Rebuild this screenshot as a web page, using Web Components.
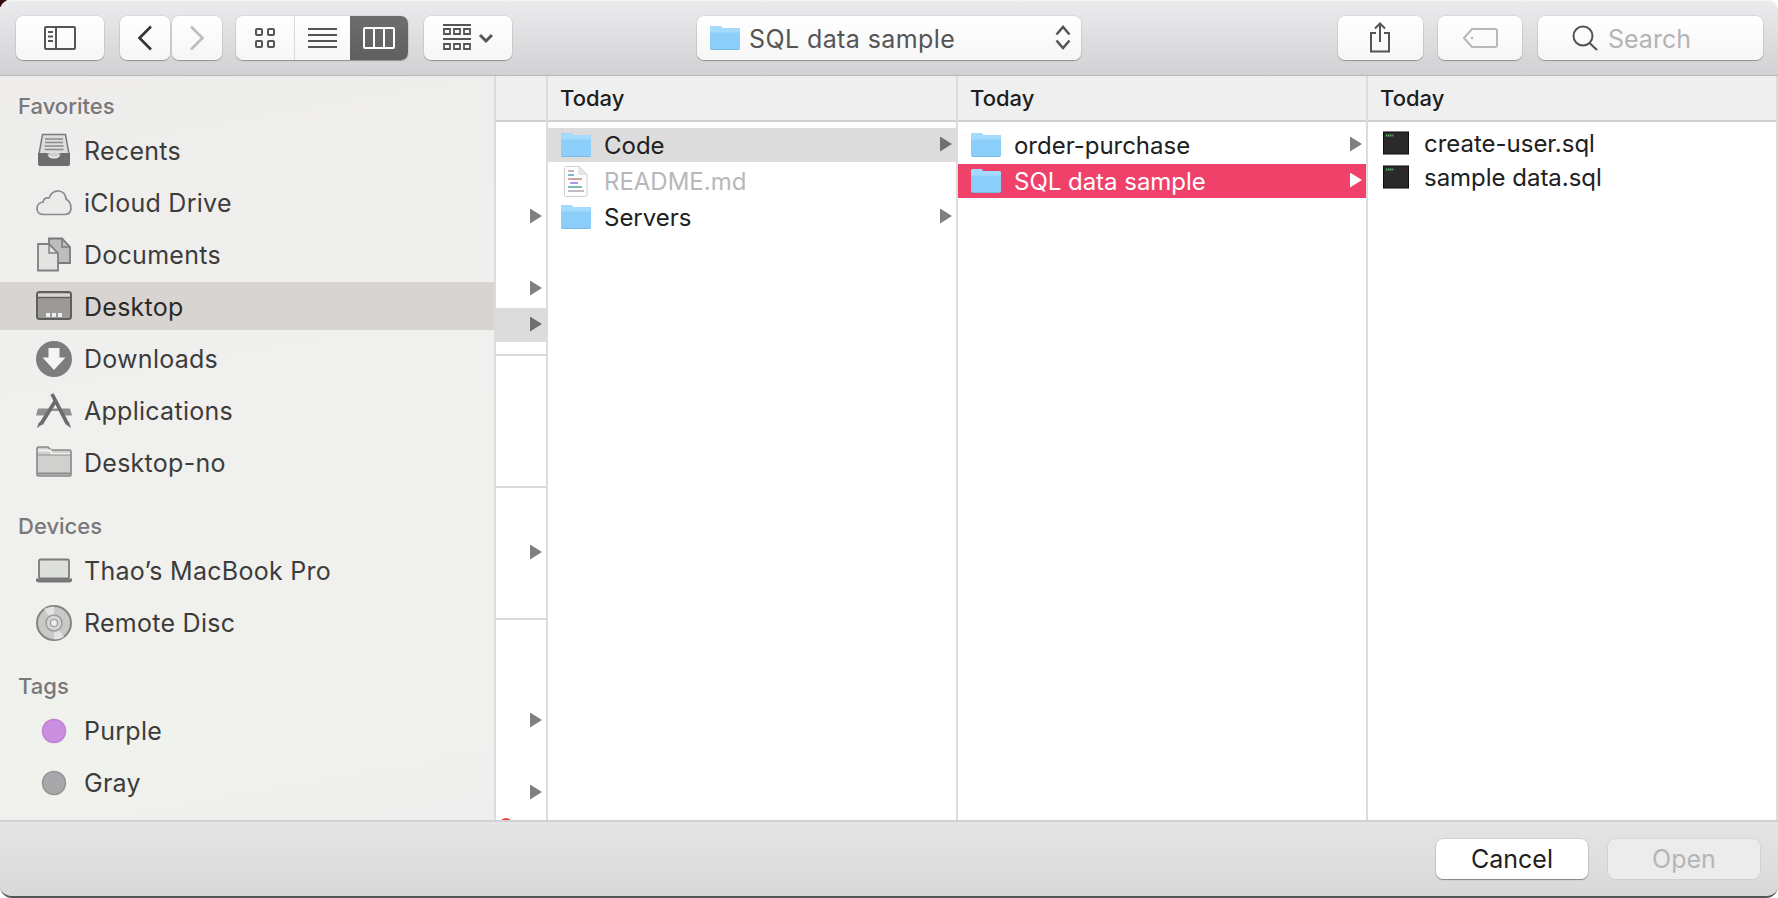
<!DOCTYPE html>
<html><head><meta charset="utf-8"><title>Open</title>
<style>
html,body{margin:0;padding:0;height:898px;overflow:hidden;background:radial-gradient(circle at 0 0,#3a0a0a 0 7px,#fff 7px);font-family:Inter,"Liberation Sans",sans-serif}
</style></head><body>
<mac-window>
  <tool-bar>
    <tool-btn w="88" icon="sidebar"></tool-btn>
    <tool-btn w="50" icon="back" ml="16"></tool-btn>
    <tool-btn w="50" icon="forward" ml="2"></tool-btn>
    <seg-group>
      <tool-btn seg w="59" icon="grid"></tool-btn>
      <tool-btn seg w="55" icon="list"></tool-btn>
      <tool-btn seg active w="58" icon="columns"></tool-btn>
    </seg-group>
    <tool-btn w="88" icon="arrange" ml="16"></tool-btn>
    <path-popup>SQL data sample</path-popup>
    <tool-btn w="85" icon="share" ml="257" shift></tool-btn>
    <tool-btn w="84" icon="tag" ml="15"></tool-btn>
    <search-box>Search</search-box>
  </tool-bar>
  <main-area>
    <side-bar>
      <side-head first>Favorites</side-head>
      <side-item icon="recents">Recents</side-item>
      <side-item icon="cloud">iCloud Drive</side-item>
      <side-item icon="documents">Documents</side-item>
      <side-item icon="desktop" selected>Desktop</side-item>
      <side-item icon="downloads">Downloads</side-item>
      <side-item icon="apps">Applications</side-item>
      <side-item icon="plainfolder">Desktop-no</side-item>
      <side-head>Devices</side-head>
      <side-item icon="laptop">Thao’s MacBook Pro</side-item>
      <side-item icon="disc">Remote Disc</side-item>
      <side-head>Tags</side-head>
      <side-item icon="purple">Purple</side-item>
      <side-item icon="gray">Gray</side-item>
    </side-bar>
    <finder-col w="50" nohead>
      <file-row arrow style="margin-top:72px"></file-row>
      <file-row arrow style="margin-top:36px"></file-row>
      <file-row arrow state="grey"></file-row>
      <col-sep style="margin-top:10px"></col-sep>
      <col-sep style="margin-top:130px"></col-sep>
      <file-row arrow style="margin-top:48px"></file-row>
      <col-sep style="margin-top:46px"></col-sep>
      <file-row arrow style="margin-top:84px"></file-row>
      <file-row arrow style="margin-top:36px"></file-row>
      <red-dot></red-dot>
    </finder-col>
    <finder-col w="408">
      <file-row icon="folder" arrow state="grey">Code</file-row>
      <file-row icon="readme" state="dim">README.md</file-row>
      <file-row icon="folder" arrow>Servers</file-row>
    </finder-col>
    <finder-col w="408">
      <file-row icon="folder" arrow>order-purchase</file-row>
      <file-row icon="folder" arrow state="pink">SQL data sample</file-row>
    </finder-col>
    <finder-col w="408" compact>
      <file-row icon="terminal" tight>create-user.sql</file-row>
      <file-row icon="terminal" tight>sample data.sql</file-row>
    </finder-col>
  </main-area>
  <bottom-bar>
    <push-btn>Cancel</push-btn>
    <push-btn disabled>Open</push-btn>
  </bottom-bar>
</mac-window>
<script>
const FOLDER=`<svg width="30" height="25" viewBox="0 0 30 25"><path d="M0 3Q0 1 2 1H10Q11 1 12 3H28Q30 3 30 5V23Q30 25 28 25H2Q0 25 0 23Z" fill="#6fb4e3"/><path d="M0 3Q0 1 2 1H10Q11 1 12 3H28Q30 3 30 5V23.5Q30 24.200 28 24.200H2Q0 24.200 0 23.5Z" fill="#8ccefa"/><path d="M0 7.500V3.500Q0 1 2 1H10Q11 1 12 3H28Q30 3 30 5V7.500Z" fill="#a4dafc"/></svg>`;
const ICONS={
 folder:FOLDER,
 readme:`<svg width="25" height="31" viewBox="0 0 25 31"><path d="M1.500 1.500Q1.500 .5 2.500 .5H16L24 8.500V29Q24 30.500 22.500 30.500H2.500Q1.500 30.500 1.500 29Z" fill="#fdfdfd" stroke="#d0d0d0"/><path d="M16 .5V8.500H24Z" fill="#e8e8e8" stroke="#d0d0d0" stroke-width=".6"/><path d="M5 5h6" stroke="#aaa" stroke-width="1.600"/><path d="M5 9h6" stroke="#5eaab8" stroke-width="1.600"/><path d="M5 13h14" stroke="#c99a9a" stroke-width="1.800"/><path d="M7 17h8" stroke="#a58ae8" stroke-width="1.800"/><path d="M5 21h14" stroke="#5ea8a8" stroke-width="1.600"/><path d="M5 25h16" stroke="#b0b0b0" stroke-width="1.600"/></svg>`,
 terminal:`<svg width="28" height="24" viewBox="0 0 28 24"><rect x="1" y=".5" width="26" height="23" rx="1" fill="#dfe3e8"/><rect x="1.500" y="1" width="25" height="22" fill="#2a2a2a" stroke="#0e0e0e"/><path d="M4 4.500h1.300m.8 0h1.300m.8 0h1.300m.8 0h1" stroke="#66c36a" stroke-width="1.800"/></svg>`,
 sidebar:`<svg width="32" height="24" viewBox="0 0 32 24" fill="none" stroke="#555" stroke-width="2"><rect x="1" y="1" width="30" height="22" rx="1"/><path d="M12 1V23"/><path d="M4 6H9M4 10.500H9M4 15H9" stroke-width="1.800"/></svg>`,
 back:`<svg width="16" height="26" viewBox="0 0 16 26" fill="none" stroke="#333" stroke-width="2.600"><path d="M14 1.500L2.500 13L14 24.500"/></svg>`,
 forward:`<svg width="16" height="26" viewBox="0 0 16 26" fill="none" stroke="#bdbdbd" stroke-width="2.600"><path d="M2 1.500L13.500 13L2 24.500"/></svg>`,
 grid:`<svg width="20" height="20" viewBox="0 0 20 20" fill="none" stroke="#555" stroke-width="2"><rect x="1" y="1" width="6" height="6" rx="1"/><rect x="13" y="1" width="6" height="6" rx="1"/><rect x="1" y="13" width="6" height="6" rx="1"/><rect x="13" y="13" width="6" height="6" rx="1"/></svg>`,
 list:`<svg width="29" height="21" viewBox="0 0 29 21" fill="none" stroke="#555" stroke-width="2"><path d="M0 2H29M0 8H29M0 14H29M0 20H29"/></svg>`,
 columns:`<svg width="32" height="22" viewBox="0 0 32 22" fill="none" stroke="#fff" stroke-width="2"><rect x="1" y="1" width="30" height="20" rx="1"/><path d="M11 1V21M21 1V21"/></svg>`,
 arrange:`<svg width="50" height="27" viewBox="0 0 50 27" fill="none" stroke="#555"><path d="M0 1H28M0 15H28" stroke-width="2"/><path d="M1 5h6v5H1zM11 5h6v5h-6zM21 5h6v5h-6zM1 20h6v5H1zM11 20h6v5h-6zM21 20h6v5h-6z" stroke-width="1.800"/><path d="M37 11L43 17L49 11" stroke-width="3"/></svg>`,
 share:`<svg width="22" height="31" viewBox="0 0 22 31" fill="none" stroke="#555" stroke-width="2"><path d="M7 11H2V29.500H20V11H15"/><path d="M11 20V2M6 6.500L11 1.500L16 6.500"/></svg>`,
 tag:`<svg width="35" height="20" viewBox="0 0 35 20" fill="none" stroke="#b8b8b8" stroke-width="2"><path d="M9 1H32Q34 1 34 3V17Q34 19 32 19H9L1 10Z"/><circle cx="9" cy="10" r="1.300" fill="#b8b8b8" stroke="none"/></svg>`,
 search:`<svg width="26" height="26" viewBox="0 0 26 26" fill="none" stroke="#555" stroke-width="2"><circle cx="11" cy="11" r="9.500"/><path d="M17.500 18L25 25" stroke-width="2.200"/></svg>`,
 updown:`<svg width="16" height="25" viewBox="0 0 16 25" fill="none" stroke="#555" stroke-width="2.500"><path d="M1.500 9.500L8 2L14.500 9.500M1.500 15.500L8 23L14.500 15.500"/></svg>`,
 recents:`<svg width="36" height="36" viewBox="0 0 36 36"><path d="M6.500 1.500H29.500L33 21H3Z" fill="#dededd" stroke="#7a7a7a" stroke-width="1.500"/><path d="M9 6H27M9 9.500H27M8.500 13H27.500M8.500 16.500H27.500" stroke="#8a8a8a" stroke-width="1.400"/><path d="M2 20H11Q12 25.500 18 25.500Q24 25.500 25 20H34V31Q34 33 32 33H4Q2 33 2 31Z" fill="#6e6e6e"/><path d="M12.500 20H23.500Q23 24 18 24Q13 24 12.500 20Z" fill="#cfcfcf"/></svg>`,
 cloud:`<svg width="36" height="36" viewBox="0 0 36 36"><path d="M7 29.500Q1 29 1 23.500Q1 18 7 17Q8 12 13 13Q16 5.500 23 6Q29.500 7 30 14Q35 17 35 23Q35 29.500 28 29.500Z" fill="#ebebe9" stroke="#8c8c8c" stroke-width="1.700"/></svg>`,
 documents:`<svg width="36" height="36" viewBox="0 0 36 36"><path d="M13 1.500H26L34 10V26H13Z" fill="#bdbdbb" stroke="#7b7b7b" stroke-width="1.800"/><path d="M2 7H13L22 16V33.500H2Z" fill="#e3e3e1" stroke="#808080" stroke-width="1.800"/><path d="M13 7V16H22" fill="none" stroke="#808080" stroke-width="1.500"/><path d="M26 1.500V10H34" fill="none" stroke="#7b7b7b" stroke-width="1.500"/></svg>`,
 desktop:`<svg width="36" height="36" viewBox="0 0 36 36"><rect x="1" y="3" width="34" height="27" rx="2.500" fill="#9c9a96" stroke="#5e5e5e" stroke-width="2"/><path d="M2 4.500H34V8H2Z" fill="#d9d5d1"/><path d="M2 8.500H34" stroke="#5e5e5e" stroke-width="1.400"/><path d="M10 24h4v4h-4zM16 24h4v4h-4zM22 24h4v4h-4z" fill="#eee"/></svg>`,
 downloads:`<svg width="36" height="36" viewBox="0 0 36 36"><circle cx="18" cy="18" r="18" fill="#7d7d7d"/><path d="M12.500 7H23.500V16.500H29.500L18 29L6.500 16.500H12.500Z" fill="#f5f5f3"/></svg>`,
 apps:`<svg width="36" height="36" viewBox="0 0 36 36" fill="none"><path d="M2 15.500H12L9 22.500H0ZM24 15.500H34L36 22.500H27ZM12 15.500H24L25 18H11Z" fill="#8f8f8f"/><path d="M16 1L31.500 31" stroke="#6b6b6b" stroke-width="3.800"/><path d="M20 7L5 31" stroke="#6b6b6b" stroke-width="3.800"/><path d="M3 29L1 35L6 31.500ZM33 29L35 35L30 31.500Z" fill="#6b6b6b"/></svg>`,
 plainfolder:`<svg width="36" height="36" viewBox="0 0 36 36"><path d="M1 3.500Q1 2 2.500 2H12L15 5H33.500Q35 5 35 6.500V30Q35 31 33.500 31H2.500Q1 31 1 30Z" fill="#d0d0ce" stroke="#888" stroke-width="1.600"/><path d="M2 5.500H14.500L15.500 9H34" fill="none" stroke="#f2f2f0" stroke-width="2"/><path d="M1.500 10H34.500" stroke="#8f8f8f" stroke-width="1"/><path d="M1.500 28.500H34.500" stroke="#8a8a8a" stroke-width="1.800"/></svg>`,
 laptop:`<svg width="36" height="36" viewBox="0 0 36 36"><rect x="3" y="6.500" width="30" height="19" rx="1.500" fill="#dcdfdb" stroke="#7b7b7b" stroke-width="1.800"/><path d="M0 25.500H36V27Q36 29.500 33 29.500H3Q0 29.500 0 27Z" fill="#777"/></svg>`,
 disc:`<svg width="36" height="36" viewBox="0 0 36 36"><circle cx="18" cy="18" r="17" fill="#c9cac7" stroke="#858585" stroke-width="2"/><path d="M18 18L8 4Q13 1.500 18 1.500ZM18 18L28 32Q23 34.500 18 34.500Z" fill="#e2e3e0"/><circle cx="18" cy="18" r="8" fill="#d4d5d2" stroke="#9a9a9a" stroke-width="1.400"/><circle cx="18" cy="18" r="3.500" fill="#eeefec" stroke="#9a9a9a" stroke-width="1.200"/></svg>`,
 purple:`<svg width="36" height="36" viewBox="0 0 36 36"><circle cx="18" cy="18" r="11.500" fill="#cb8fe0" stroke="#c27fd8" stroke-width="1.500"/></svg>`,
 gray:`<svg width="36" height="36" viewBox="0 0 36 36"><circle cx="18" cy="18" r="11.500" fill="#a8a8aa" stroke="#949496" stroke-width="1.500"/></svg>`
};
function def(name,css,html,after){
  customElements.define(name,class extends HTMLElement{
    connectedCallback(){
      if(this.shadowRoot)return;
      const s=this.attachShadow({mode:'open'});
      s.innerHTML=`<style>${css}</style>`+(typeof html==='function'?html(this):html);
      if(after)after(this,s);
    }
  });
}
const btnFace=`background:linear-gradient(#fff,#f6f6f6);border-radius:7px;box-shadow:0 1px 1px rgba(0,0,0,.28),0 0 0 .5px rgba(0,0,0,.12);`;
def('mac-window',`:host{display:flex;flex-direction:column;width:1778px;height:898px;box-sizing:border-box;border-radius:10px 10px 12px 12px;border-bottom:2px solid #555;overflow:hidden;color:#222;font:24px Inter,"Liberation Sans",sans-serif}`,`<slot></slot>`);
def('tool-bar',`:host{display:flex;flex:none;align-items:center;box-sizing:border-box;height:76px;padding:0 15px 0 16px;background:linear-gradient(#ecebed,#d2d0d3);border-bottom:1px solid #b8b7b9;box-shadow:inset 0 1px 0 #f5f4f5}`,`<slot></slot>`);
def('tool-btn',`:host{display:flex;flex:none;align-items:center;justify-content:center;height:44px;box-sizing:border-box;${btnFace}}
:host([seg]){border-radius:0;box-shadow:none;background:none;height:100%}
:host([active]){background:linear-gradient(#6d6d6d,#5f5f5f)}
:host([shift]){padding-right:2px}
svg{display:block}`,t=>ICONS[t.getAttribute('icon')],t=>{t.style.width=t.getAttribute('w')+'px';const m=t.getAttribute('ml');if(m)t.style.marginLeft=m+'px';});
def('seg-group',`:host{display:flex;flex:none;height:44px;margin-left:14px;border-radius:7px;overflow:hidden;background:linear-gradient(#fff,#f6f6f6);box-shadow:0 1px 1px rgba(0,0,0,.28),0 0 0 .5px rgba(0,0,0,.12)}
::slotted(:first-child){border-right:1px solid #d9d9d9}`,`<slot></slot>`);
def('path-popup',`:host{display:flex;flex:none;align-items:center;box-sizing:border-box;width:384px;height:44px;margin-left:185px;padding:0 10px 0 13px;${btnFace};color:#555;font-size:25px;letter-spacing:.4px}
.t{flex:1;margin-left:9px;padding-top:2px}svg{display:block}`,`${FOLDER}<span class="t"><slot></slot></span>${ICONS.updown}`);
def('search-box',`:host{display:flex;flex:none;align-items:center;box-sizing:border-box;width:225px;height:44px;margin-left:16px;padding-left:34px;gap:10px;${btnFace};color:#b4b4b4;font-size:25px}svg{display:block}.t{padding-top:2px}`,`${ICONS.search}<span class="t"><slot></slot></span>`);
def('main-area',`:host{display:flex;flex:1;min-height:0;background:#fff}`,`<slot></slot>`);
def('side-bar',`:host{display:flex;flex-direction:column;flex:none;width:494px;border-right:2px solid #dcdcdc;background:linear-gradient(170deg,#eeedec 0%,#f0f0ee 45%,#f0f2ed 85%,#efeeee 100%)}`,`<slot></slot>`);
def('side-head',`:host{display:flex;flex:none;align-items:flex-end;height:56px;box-sizing:border-box;padding:0 0 6px 18px;color:#78787a;font-size:22px;font-weight:500;line-height:26px}
:host([first]){height:49px;padding-bottom:6px}`,`<slot></slot>`);
def('side-item',`:host{display:flex;flex:none;align-items:center;box-sizing:border-box;height:48px;margin:2px 0;padding-left:36px;gap:12px;color:#3c3c3c;font-size:25px;letter-spacing:.27px}
:host([selected]){margin:1px 0 3px;padding-top:2px;background:#d8d4d1;color:#2a2a2a}
svg{display:block}`,t=>ICONS[t.getAttribute('icon')]+`<span><slot></slot></span>`);
def('finder-col',`:host{display:flex;flex:none;flex-direction:column;position:relative;border-right:2px solid #dcdcdc}
.h{flex:none;box-sizing:border-box;height:46px;border-bottom:2px solid #cfcfcf;background:#efefef;padding-left:12px;padding-top:1px;line-height:42px;font-size:22px;font-weight:500;color:#1e1e1e}
.b{display:flex;flex-direction:column;flex:1;min-height:0;padding-top:6px;position:relative;overflow:hidden}
:host([compact]) .b{padding-top:4px}`,t=>`<div class="h">${t.hasAttribute('nohead')?'':'Today'}</div><div class="b"><slot></slot></div>`,t=>{t.style.width=t.getAttribute('w')+'px';});
def('file-row',`:host{display:flex;flex:none;align-items:center;height:34px;margin-bottom:2px;padding:0 4px 0 13px;color:#202020;font-size:24px;letter-spacing:-.02px}
:host([tight]){margin-bottom:0;padding-left:13px}
:host([state=grey]){background:#dcdcdc}
:host([state=dim]){color:#b8b8b8}
:host([state=pink]){background:#ef416a;color:#fff}
.i{flex:none;width:30px;display:flex;justify-content:center;margin-right:13px}
:host([icon=readme]) .i{padding-right:2px;width:28px}
:host([icon=folder]) .i{margin-bottom:2px}
.l{flex:1;white-space:nowrap}
.a{flex:none;width:12px;height:15px;margin-bottom:2px;background:#7f7f7f;clip-path:polygon(0 0,100% 50%,0 100%)}
:host([state=grey]) .a{background:#6f6f6f}
:host([state=pink]) .a{background:#fff}
svg{display:block}`,t=>{
  const ic=t.getAttribute('icon');
  const arrow=t.hasAttribute('arrow')?'<span class="a"></span>':'';
  if(!ic)return `<span class="l"></span>${arrow}`;
  return `<span class="i">${ICONS[ic]}</span><span class="l"><slot></slot></span>${arrow}`;
});
def('col-sep',`:host{display:block;flex:none;height:2px;background:#d9d9d9}`,``);
def('red-dot',`:host{position:absolute;left:4px;bottom:-10px;width:12px;height:12px;border-radius:50%;background:#e8443a}`,``);
def('bottom-bar',`:host{display:flex;flex:none;align-items:center;justify-content:flex-end;gap:20px;box-sizing:border-box;height:76px;padding-right:18px;border-top:2px solid #d2d2d2;background:linear-gradient(#e6e5e6,#d8d8d8)}`,`<slot></slot>`);
def('push-btn',`:host{display:flex;align-items:center;justify-content:center;width:152px;height:40px;background:#fff;border-radius:7px;box-shadow:0 1px 1px rgba(0,0,0,.35),0 0 0 .5px rgba(0,0,0,.15);font-size:25px;color:#1e1e1e}
:host([disabled]){background:#ececec;color:#b5b5b5;box-shadow:0 0 0 .5px rgba(0,0,0,.1)}`,`<slot></slot>`);
</script>
</body></html>
